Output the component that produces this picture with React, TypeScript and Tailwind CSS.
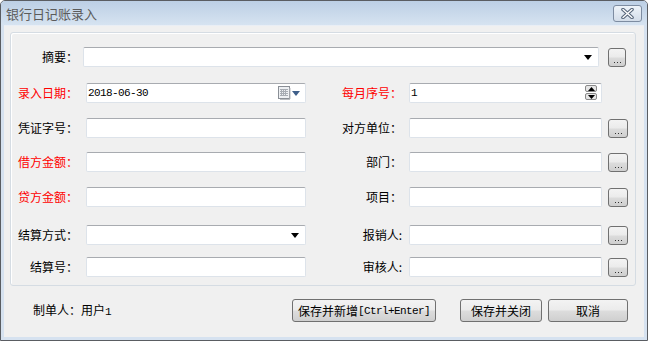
import React from "react";

// Win7-style "bank journal entry" dialog, laid out in flow rows.

type BoxProps = {
  className?: string;
  children?: React.ReactNode;
};

const mono = "font-['Liberation_Mono',monospace] text-[11px] tracking-[-0.6px]";

function TextBox({ className = "", children }: BoxProps) {
  return (
    <div
      className={`relative flex h-[20px] shrink-0 items-center rounded-[2px] border border-[#dde3ea] border-t-[#a8abb0] bg-white pl-[1px] ${className}`}
    >
      {children}
    </div>
  );
}

function DotsButton({ className = "" }: { className?: string }) {
  return (
    <div
      className={`flex h-[19px] shrink-0 items-end justify-center rounded-[3px] border border-[#707070] bg-[linear-gradient(#f3f3f3_0%,#ebebeb_48%,#dcdcdc_52%,#cfcfcf_100%)] pb-[3px] ${className}`}
    >
      <span className="flex gap-[2px]">
        <span className="h-[1px] w-[1px] bg-[#333]" />
        <span className="h-[1px] w-[1px] bg-[#333]" />
        <span className="h-[1px] w-[1px] bg-[#333]" />
      </span>
    </div>
  );
}

function DropArrow() {
  return (
    <svg width="8" height="5" viewBox="0 0 8 5" className="absolute right-[6px] top-[7px]">
      <path d="M0 0h8L4 5z" fill="#000" />
    </svg>
  );
}

function CalendarIcon() {
  return (
    <div className="absolute right-[5px] top-[2px] flex items-center gap-[1px]">
      <svg width="13" height="14" viewBox="0 0 13 14">
        <rect x="0.5" y="0.5" width="11" height="12" fill="#eef0f3" stroke="#8a8f96" />
        <rect x="11.5" y="2" width="1" height="11" fill="#b9bcc0" />
        <rect x="2" y="13" width="10" height="1" fill="#b9bcc0" />
        <path
          d="M2 3.5h8M2 5.5h8M2 7.5h8M2 9.5h8M3.5 3v7M5.5 3v7M7.5 3v7"
          stroke="#a7acb3"
          strokeWidth="1"
        />
      </svg>
      <svg width="8" height="5" viewBox="0 0 8 5">
        <path d="M0 0h8L4 5z" fill="#3f5f8a" />
      </svg>
    </div>
  );
}

function Spinner() {
  return (
    <div className="absolute right-[4px] top-[1px] flex flex-col gap-[1px]">
      {[0, 1].map((i) => (
        <div
          key={i}
          className="flex h-[7px] w-[12px] items-center justify-center rounded-[2px] border border-[#8a8a8a] bg-[#e6e6e6]"
        >
          <svg width="7" height="4" viewBox="0 0 7 4">
            <path d={i === 0 ? "M0 4h7L3.5 0z" : "M0 0h7L3.5 4z"} fill="#000" />
          </svg>
        </div>
      ))}
    </div>
  );
}

function LeftLabel({ text, red }: { text: string; red?: boolean }) {
  return (
    <span className={`w-[67px] shrink-0 text-right ${red ? "text-[#ff0000]" : "text-black"}`}>
      {text}
    </span>
  );
}

function RightLabel({ text, red }: { text: string; red?: boolean }) {
  return (
    <span className={`w-[98px] shrink-0 pr-[2px] text-right ${red ? "text-[#ff0000]" : "text-black"}`}>
      {text}
    </span>
  );
}

function PushButton({ className = "", children }: BoxProps) {
  return (
    <div
      className={`flex h-[23px] shrink-0 items-center justify-center rounded-[3px] border border-[#707070] bg-[linear-gradient(#f3f3f3_0%,#ebebeb_48%,#dddddd_52%,#cfcfcf_100%)] text-black ${className}`}
    >
      {children}
    </div>
  );
}

export default function App() {
  return (
    <div className="flex h-[341px] w-[648px] flex-col rounded-t-[5px] border border-[#5a5d62] bg-[#d6e2f0] font-['Noto_Sans_CJK_SC',sans-serif] text-[12px] leading-[20px]">
      {/* title bar */}
      <div className="flex h-[24px] shrink-0 items-start justify-between rounded-t-[4px] bg-[linear-gradient(#bccfe5,#d6e3f1)] pl-[5px] pr-[5px]">
        <span className="mt-[3px] text-[13px] leading-[20px] text-[#5b5b5b]">银行日记账录入</span>
        <div className="mt-[4px] flex h-[17px] w-[29px] items-center justify-center rounded-[3px] border border-[#7d8ca1] bg-[linear-gradient(#eef3f9,#d3dde9)]">
          <svg width="13" height="11" viewBox="0 0 13 11">
            <path d="M2 1.5l9 8M11 1.5l-9 8" stroke="#56657a" strokeWidth="3.6" strokeLinecap="round" />
            <path d="M2 1.5l9 8M11 1.5l-9 8" stroke="#ffffff" strokeWidth="1.4" strokeLinecap="round" />
          </svg>
        </div>
      </div>

      {/* client area */}
      <div className="mx-[3px] mb-[3px] flex flex-1 flex-col border-t border-[#e9eef5] bg-[#f0f0f0]">
        <div className="ml-[6px] mr-[8px] mt-[6px] flex h-[254px] flex-col rounded-[3px] border border-[#d5dce3] shadow-[inset_1px_1px_0_#ffffff]">
          {/* 摘要 */}
          <div className="mt-[14px] flex items-center">
            <LeftLabel text="摘要：" />
            <TextBox className="ml-[5px] w-[516px]">
              <DropArrow />
            </TextBox>
            <DotsButton className="ml-[9px] w-[18px]" />
          </div>

          {/* 录入日期 / 每月序号 */}
          <div className="mt-[16px] flex items-center">
            <LeftLabel text="录入日期：" red />
            <TextBox className="ml-[8px] w-[220px]">
              <span className={mono}>2018-06-30</span>
              <CalendarIcon />
            </TextBox>
            <RightLabel text="每月序号：" red />
            <TextBox className="ml-[5px] w-[193px]">
              <span className={mono}>1</span>
              <Spinner />
            </TextBox>
          </div>

          {/* 凭证字号 / 对方单位 */}
          <div className="mt-[15px] flex items-center">
            <LeftLabel text="凭证字号：" />
            <TextBox className="ml-[8px] w-[220px]" />
            <RightLabel text="对方单位：" />
            <TextBox className="ml-[5px] w-[193px]" />
            <DotsButton className="ml-[6px] w-[20px]" />
          </div>

          {/* 借方金额 / 部门 */}
          <div className="mt-[14px] flex items-center">
            <LeftLabel text="借方金额：" red />
            <TextBox className="ml-[8px] w-[220px]" />
            <RightLabel text="部门：" />
            <TextBox className="ml-[5px] w-[193px]" />
            <DotsButton className="ml-[6px] w-[20px]" />
          </div>

          {/* 贷方金额 / 项目 */}
          <div className="mt-[15px] flex items-center">
            <LeftLabel text="贷方金额：" red />
            <TextBox className="ml-[8px] w-[220px]" />
            <RightLabel text="项目：" />
            <TextBox className="ml-[5px] w-[193px]" />
            <DotsButton className="ml-[6px] w-[20px]" />
          </div>

          {/* 结算方式 / 报销人 */}
          <div className="mt-[18px] flex items-center">
            <LeftLabel text="结算方式：" />
            <TextBox className="ml-[8px] w-[220px]">
              <DropArrow />
            </TextBox>
            <RightLabel text="报销人:" />
            <TextBox className="ml-[5px] w-[193px]" />
            <DotsButton className="ml-[6px] w-[20px]" />
          </div>

          {/* 结算号 / 审核人 */}
          <div className="mt-[12px] flex items-center">
            <LeftLabel text="结算号：" />
            <TextBox className="ml-[8px] w-[220px]" />
            <RightLabel text="审核人:" />
            <TextBox className="ml-[5px] w-[193px]" />
            <DotsButton className="ml-[6px] w-[20px]" />
          </div>
        </div>

        {/* footer */}
        <div className="mt-[13px] flex items-center pl-[29px] pr-[16px]">
          <span className="text-black">
            制单人：用户<span className={mono}>1</span>
          </span>
          <div className="flex-1" />
          <PushButton className="w-[144px]">
            保存并新增<span className={mono}>[Ctrl+Enter]</span>
          </PushButton>
          <PushButton className="ml-[24px] w-[82px]">保存并关闭</PushButton>
          <PushButton className="ml-[6px] w-[80px]">取消</PushButton>
        </div>
      </div>
    </div>
  );
}
